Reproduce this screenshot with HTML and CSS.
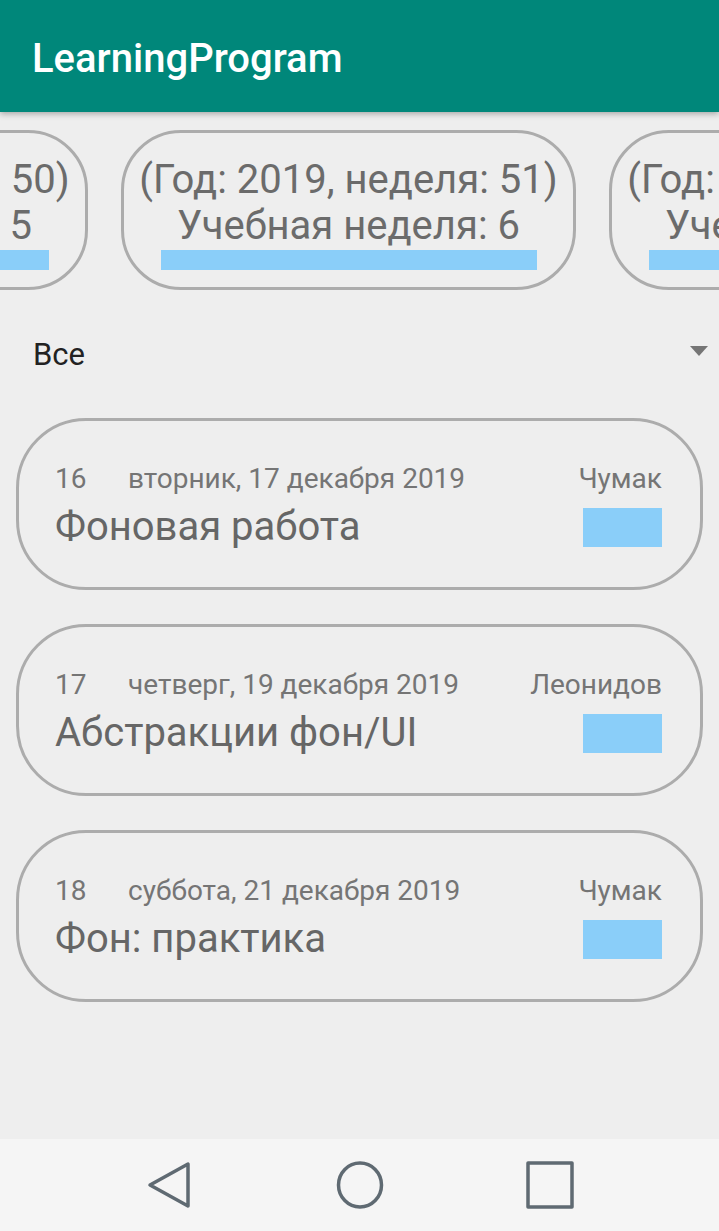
FILE: index.html
```html
<!DOCTYPE html>
<html lang="ru">
<head>
<meta charset="utf-8">
<title>LearningProgram</title>
<link rel="stylesheet" href="styles.css">
</head>
<body>
<div class="screen">
  <header class="appbar">
    <h1 class="appbar-title">LearningProgram</h1>
  </header>

  <div class="weeks">
    <div class="weeks-track">
      <div class="week">
        <div class="week-line">(Год: 2019, неделя: 50)</div>
        <div class="week-line">Учебная неделя: 5</div>
        <div class="week-bar"></div>
      </div>
      <div class="week">
        <div class="week-line">(Год: 2019, неделя: 51)</div>
        <div class="week-line">Учебная неделя: 6</div>
        <div class="week-bar"></div>
      </div>
      <div class="week">
        <div class="week-line">(Год: 2019, неделя: 52)</div>
        <div class="week-line">Учебная неделя: 7</div>
        <div class="week-bar"></div>
      </div>
    </div>
  </div>

  <div class="spinner">
    <span class="spinner-text">Все</span>
    <span class="spinner-arrow"></span>
  </div>

  <div class="lessons">
    <div class="lesson">
      <div class="lesson-main">
        <div class="lesson-meta">
          <span class="lesson-num">16</span>
          <span class="lesson-date">вторник, 17 декабря 2019</span>
        </div>
        <div class="lesson-title">Фоновая работа</div>
      </div>
      <div class="lesson-side">
        <span class="lesson-teacher">Чумак</span>
        <span class="lesson-mark"></span>
      </div>
    </div>
    <div class="lesson">
      <div class="lesson-main">
        <div class="lesson-meta">
          <span class="lesson-num">17</span>
          <span class="lesson-date">четверг, 19 декабря 2019</span>
        </div>
        <div class="lesson-title">Абстракции фон/UI</div>
      </div>
      <div class="lesson-side">
        <span class="lesson-teacher">Леонидов</span>
        <span class="lesson-mark"></span>
      </div>
    </div>
    <div class="lesson">
      <div class="lesson-main">
        <div class="lesson-meta">
          <span class="lesson-num">18</span>
          <span class="lesson-date">суббота, 21 декабря 2019</span>
        </div>
        <div class="lesson-title">Фон: практика</div>
      </div>
      <div class="lesson-side">
        <span class="lesson-teacher">Чумак</span>
        <span class="lesson-mark"></span>
      </div>
    </div>
  </div>

  <nav class="navbar">
    <svg class="nav-icon" width="48" height="48" viewBox="0 0 48 48"><path d="M42 3 L42 45 L4 24 Z" fill="none" stroke="#5f6a72" stroke-width="3.5" stroke-linejoin="round"/></svg>
    <svg class="nav-icon" width="48" height="48" viewBox="0 0 48 48"><ellipse cx="24" cy="24" rx="21.5" ry="22" fill="none" stroke="#5f6a72" stroke-width="3.5"/></svg>
    <svg class="nav-icon" width="48" height="48" viewBox="0 0 48 48"><rect x="2" y="2" width="44" height="44" fill="none" stroke="#5f6a72" stroke-width="3.5" stroke-linejoin="round"/></svg>
  </nav>
</div>
</body>
</html>
```

FILE: styles.css
```css
* { box-sizing: border-box; }
html, body { margin: 0; padding: 0; }
body {
  width: 719px;
  height: 1231px;
  overflow: hidden;
  background: #eeeeee;
  font-family: Roboto, "Noto Sans", "Liberation Sans", sans-serif;
}
.screen {
  height: 1231px;
  display: flex;
  flex-direction: column;
}
.appbar {
  height: 112px;
  flex: none;
  background: #00877a;
  display: flex;
  align-items: center;
  padding-left: 32px;
  box-shadow: 0 2px 6px rgba(0,0,0,0.3);
  position: relative;
  z-index: 1;
}
.appbar-title {
  margin: 0;
  color: #ffffff;
  font-size: 40px;
  font-weight: 500;
  letter-spacing: 0;
  padding-top: 4px;
}
.weeks {
  overflow: hidden;
  padding-top: 18px;
  flex: none;
}
.weeks-track {
  display: flex;
  gap: 33px;
  margin-left: -367px;
}
.week {
  flex: none;
  width: 455px;
  height: 160px;
  border: 3px solid #acacac;
  border-radius: 60px;
  display: flex;
  flex-direction: column;
  align-items: center;
  padding-top: 24px;
}
.week-line {
  font-size: 40px;
  line-height: 46px;
  color: #6b6b6b;
  white-space: nowrap;
}
.week-bar {
  width: 376px;
  height: 20px;
  background: #8acef9;
  margin-top: 1px;
}
.spinner {
  height: 128px;
  flex: none;
  display: flex;
  align-items: center;
  justify-content: space-between;
  padding: 0 11px 0 33px;
}
.spinner-text {
  font-size: 31px;
  color: #222222;
}
.spinner-arrow {
  width: 0;
  height: 0;
  border-left: 9px solid transparent;
  border-right: 9px solid transparent;
  border-top: 10px solid #757575;
  margin-bottom: 6px;
}
.lessons {
  flex: 1;
  display: flex;
  flex-direction: column;
  gap: 34px;
  padding: 0 16px;
}
.lesson {
  height: 172px;
  border: 3px solid #acacac;
  border-radius: 70px;
  display: flex;
  justify-content: space-between;
  align-items: flex-start;
  padding: 39px 38px 0 36px;
}
.lesson-meta {
  display: flex;
  height: 36px;
  align-items: center;
}
.lesson-num {
  width: 73px;
  font-size: 28px;
  color: #757575;
}
.lesson-date {
  font-size: 28px;
  color: #757575;
}
.lesson-title {
  font-size: 40px;
  color: #666666;
  line-height: 50px;
  margin-top: 6px;
}
.lesson-side {
  display: flex;
  flex-direction: column;
  align-items: flex-end;
}
.lesson-teacher {
  font-size: 28px;
  color: #757575;
  height: 36px;
  display: flex;
  align-items: center;
}
.lesson-mark {
  width: 79px;
  height: 39px;
  background: #8acef9;
  margin-top: 12px;
}
.navbar {
  height: 92px;
  flex: none;
  background: #f5f5f5;
  display: flex;
  align-items: center;
  justify-content: center;
  gap: 142px;
}
.nav-icon {
  display: block;
}
```
